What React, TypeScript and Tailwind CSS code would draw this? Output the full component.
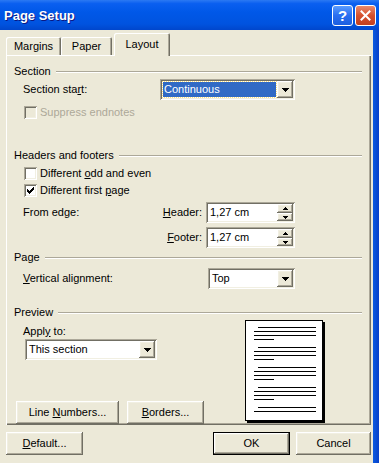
import React from "react";

const raised =
  "shadow-[inset_-1px_-1px_#716F64,inset_1px_1px_#fff,inset_-2px_-2px_#ACA899,inset_2px_2px_#F1EFE2]";
const sunken =
  "shadow-[inset_1px_1px_#ACA899,inset_-1px_-1px_#fff,inset_2px_2px_#716F64,inset_-2px_-2px_#F1EFE2]";

function DownArrow() {
  return (
    <svg width="7" height="4" shapeRendering="crispEdges">
      <rect x="0" y="0" width="7" height="1" fill="#000" />
      <rect x="1" y="1" width="5" height="1" fill="#000" />
      <rect x="2" y="2" width="3" height="1" fill="#000" />
      <rect x="3" y="3" width="1" height="1" fill="#000" />
    </svg>
  );
}

function SmallArrow({ up }: { up?: boolean }) {
  return (
    <svg width="5" height="3" shapeRendering="crispEdges" className={up ? "rotate-180" : ""}>
      <rect x="0" y="0" width="5" height="1" fill="#000" />
      <rect x="1" y="1" width="3" height="1" fill="#000" />
      <rect x="2" y="2" width="1" height="1" fill="#000" />
    </svg>
  );
}

function GroupHeader({ label }: { label: string }) {
  return (
    <div className="flex h-[13px] items-center pl-[8px] pr-[9px]">
      <span>{label}</span>
      <div className="ml-[5px] h-[2px] flex-1 border-t border-b border-t-[#ACA899] border-b-white" />
    </div>
  );
}

type TComboProps = {
  value: string;
  className: string;
  selected?: boolean;
};

function Combo({ value, className, selected }: TComboProps) {
  return (
    <div className={`flex h-[21px] bg-white p-[2px] ${sunken} ${className}`}>
      <div className="flex flex-1 items-center">
        {selected ? (
          <span className="ml-[1px] mr-[1px] flex h-[15px] flex-1 items-center bg-[#316AC5] pl-[1px] text-white outline-1 outline-dotted outline-[#ffe27a]">
            {value}
          </span>
        ) : (
          <span className="pl-[2px]">{value}</span>
        )}
      </div>
      <div className={`flex h-[17px] w-[16px] items-center justify-center bg-[#ECE9D8] ${raised}`}>
        <DownArrow />
      </div>
    </div>
  );
}

function Spin({ value }: { value: string }) {
  return (
    <div className={`flex h-[21px] w-[89px] bg-white p-[2px] ${sunken}`}>
      <span className="flex flex-1 items-center pl-[2px]">{value}</span>
      <div className="flex w-[16px] flex-col">
        <div className={`flex h-[9px] items-center justify-center bg-[#ECE9D8] ${raised}`}>
          <SmallArrow up />
        </div>
        <div className={`flex h-[8px] items-center justify-center bg-[#ECE9D8] ${raised}`}>
          <SmallArrow />
        </div>
      </div>
    </div>
  );
}

function Checkbox({ checked, disabled }: { checked?: boolean; disabled?: boolean }) {
  return (
    <div
      className={`flex h-[13px] w-[13px] items-center justify-center ${sunken} ${
        disabled ? "bg-[#ECE9D8]" : "bg-white"
      }`}
    >
      {checked && (
        <svg width="7" height="7" viewBox="0 0 7 7" shapeRendering="crispEdges" fill="#000">
          <rect x="6" y="0" width="1" height="1" />
          <rect x="5" y="1" width="2" height="1" />
          <rect x="0" y="2" width="1" height="1" />
          <rect x="4" y="2" width="3" height="1" />
          <rect x="0" y="3" width="2" height="1" />
          <rect x="3" y="3" width="3" height="1" />
          <rect x="0" y="4" width="5" height="1" />
          <rect x="1" y="5" width="3" height="1" />
          <rect x="2" y="6" width="1" height="1" />
        </svg>
      )}
    </div>
  );
}

function Button({ children, className, isDefault }: { children: React.ReactNode; className: string; isDefault?: boolean }) {
  return (
    <div
      className={`flex h-[23px] items-center justify-center bg-[#ECE9D8] ${className} ${
        isDefault
          ? "shadow-[inset_0_0_0_1px_#000,inset_-2px_-2px_#716F64,inset_2px_2px_#fff,inset_-3px_-3px_#ACA899,inset_3px_3px_#F1EFE2]"
          : raised
      }`}
    >
      {children}
    </div>
  );
}

function PageLines({ count }: { count: number }) {
  const lines = [0, 1, 2, 3].slice(0, count);
  return (
    <div className="flex flex-col gap-[3px]">
      {lines.map((i) => (
        <div
          key={i}
          className={`h-px bg-black ${i === 0 ? "ml-[12px] w-[58px]" : i === 3 ? "ml-[8px] w-[20px]" : "ml-[8px] w-[62px]"}`}
        />
      ))}
    </div>
  );
}

export default function App() {
  return (
    <div className="flex h-[463px] w-[379px] flex-col bg-[#ECE9D8] font-['Liberation_Sans',Arial,sans-serif] text-[11px] leading-[13px] text-black">
      {/* title bar */}
      <div className="flex h-[30px] items-center bg-[linear-gradient(to_bottom,#2b79f3_0%,#0a5ff0_12%,#0058e8_40%,#0053df_80%,#0046cc_100%)] pl-[4px] pr-[3px]">
        <span className="flex-1 text-[13px] font-bold text-white [text-shadow:1px_1px_0_#0a1883]">Page Setup</span>
        <div className="flex h-[21px] w-[21px] items-center justify-center rounded-[3px] border border-white bg-[linear-gradient(to_bottom,#5a9cff,#2a6ef0_50%,#1c5fe0)] text-[15px] font-bold text-white">
          ?
        </div>
        <div className="ml-[2px] flex h-[21px] w-[21px] items-center justify-center rounded-[3px] border border-white bg-[linear-gradient(to_bottom,#e98a6c,#d6512e_50%,#c2401f)]">
          <svg width="11" height="11" viewBox="0 0 11 11">
            <path d="M1.5 1.5L9.5 9.5M9.5 1.5L1.5 9.5" stroke="#fff" strokeWidth="2" strokeLinecap="square" />
          </svg>
        </div>
      </div>

      <div className="flex flex-1">
        <div className="flex w-[373px] flex-col">
          {/* tabs */}
          <div className="flex h-[25px] items-end pl-[6px]">
            <div className="flex h-[18px] w-[55px] items-center justify-center rounded-t-[2px] shadow-[inset_1px_1px_#fff,inset_-1px_0_#716F64,inset_-2px_0_#ACA899]">
              Margins
            </div>
            <div className="flex h-[18px] w-[51px] items-center justify-center rounded-t-[2px] shadow-[inset_1px_1px_#fff,inset_-1px_0_#716F64,inset_-2px_0_#ACA899]">
              Paper
            </div>
            <div className="relative z-10 -mb-px ml-[2px] flex h-[23px] w-[56px] items-start justify-center rounded-t-[2px] bg-[#ECE9D8] pt-[5px] shadow-[inset_1px_1px_#fff,inset_-1px_0_#716F64,inset_-2px_0_#ACA899]">
              Layout
            </div>
          </div>

          {/* tab panel */}
          <div className="ml-[6px] flex h-[370px] w-[365px] flex-col shadow-[inset_1px_1px_#fff,inset_-1px_-1px_#716F64,inset_-2px_-2px_#ACA899]">
            <div className="mt-[10px]">
              <GroupHeader label="Section" />
            </div>
            <div className="mt-[1px] flex h-[21px] items-center pl-[17px] pr-[76px]">
              <span className="flex-1">
                Section sta<u>r</u>t:
              </span>
              <Combo value="Continuous" className="w-[135px]" selected />
            </div>
            <div className="mt-[6px] flex h-[13px] items-center gap-[3px] pl-[18px] text-[#ACA899]">
              <Checkbox disabled />
              <span>Suppress endnotes</span>
            </div>

            <div className="mt-[30px]">
              <GroupHeader label="Headers and footers" />
            </div>
            <div className="mt-[5px] flex h-[13px] items-center gap-[3px] pl-[18px]">
              <Checkbox />
              <span>
                Different <u>o</u>dd and even
              </span>
            </div>
            <div className="mt-[4px] flex h-[13px] items-center gap-[3px] pl-[18px]">
              <Checkbox checked />
              <span>
                Different first <u>p</u>age
              </span>
            </div>
            <div className="mt-[5px] flex h-[21px] items-center pl-[17px] pr-[76px]">
              <span className="flex-1">From edge:</span>
              <span className="mr-[4px]">
                <u>H</u>eader:
              </span>
              <Spin value="1,27 cm" />
            </div>
            <div className="mt-[4px] flex h-[21px] items-center justify-end pr-[76px]">
              <span className="mr-[4px]">
                <u>F</u>ooter:
              </span>
              <Spin value="1,27 cm" />
            </div>

            <div className="mt-[3px]">
              <GroupHeader label="Page" />
            </div>
            <div className="mt-[4px] flex h-[21px] items-center pl-[17px] pr-[76px]">
              <span className="flex-1">
                <u>V</u>ertical alignment:
              </span>
              <Combo value="Top" className="w-[87px]" />
            </div>

            <div className="mt-[17px]">
              <GroupHeader label="Preview" />
            </div>
            <div className="flex">
              <div className="flex w-[230px] flex-col">
                <div className="mt-[6px] flex h-[13px] items-center pl-[17px]">
                  <span>
                    Appl<u>y</u> to:
                  </span>
                </div>
                <div className="mt-[1px] pl-[19px]">
                  <Combo value="This section" className="w-[132px]" />
                </div>
                <div className="mt-[41px] flex gap-[8px] pl-[10px]">
                  <Button className="w-[103px]">
                    <span>
                      Line <u>N</u>umbers...
                    </span>
                  </Button>
                  <Button className="w-[77px]">
                    <span>
                      <u>B</u>orders...
                    </span>
                  </Button>
                </div>
              </div>
              <div className="ml-[9px] mt-[1px] flex h-[101px] w-[78px] flex-col gap-[7px] border border-black bg-white pt-[6px] shadow-[2px_2px_0_#000]">
                <PageLines count={4} />
                <PageLines count={4} />
                <PageLines count={4} />
                <PageLines count={4} />
                <PageLines count={2} />
              </div>
            </div>
          </div>

          {/* dialog buttons */}
          <div className="mt-[7px] flex pl-[6px] pr-[2px]">
            <Button className="w-[77px]">
              <span>
                <u>D</u>efault...
              </span>
            </Button>
            <div className="flex-1" />
            <Button className="w-[77px]" isDefault>
              <span>OK</span>
            </Button>
            <Button className="ml-[6px] w-[75px]">
              <span>Cancel</span>
            </Button>
          </div>
        </div>
        <div className="w-[6px] bg-[linear-gradient(to_right,#0a5ae0,#0840c8)]" />
      </div>
    </div>
  );
}
